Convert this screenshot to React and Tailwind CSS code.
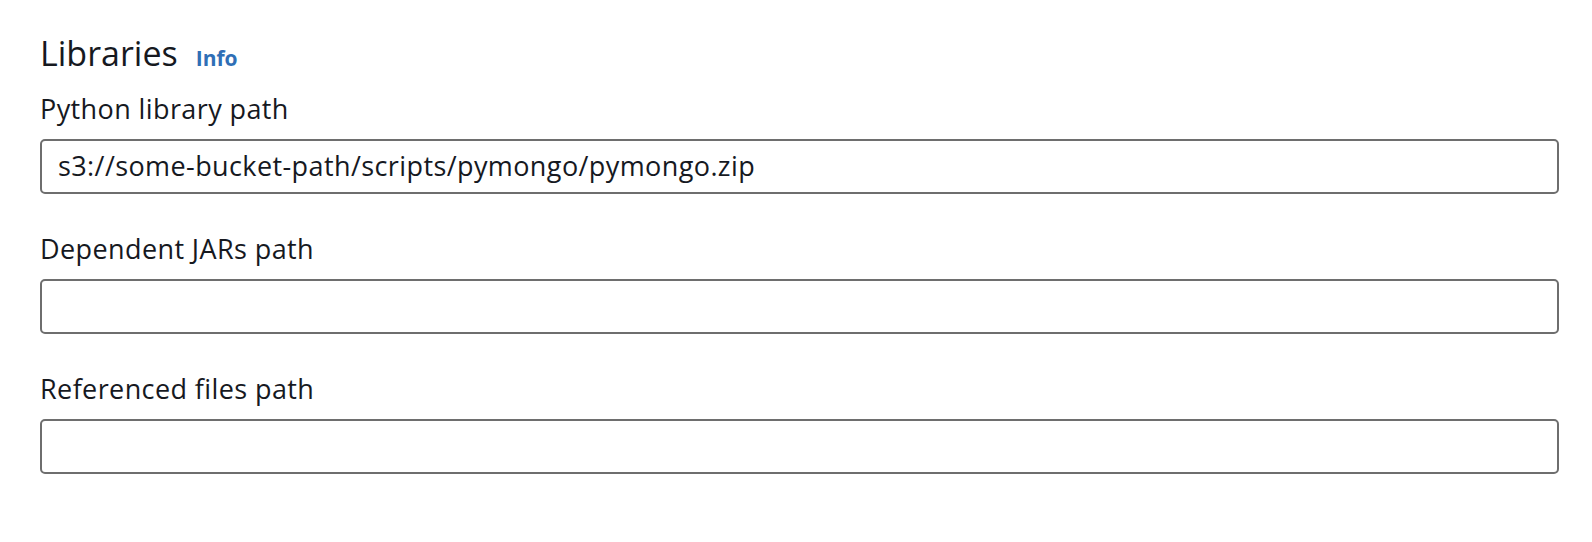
import React from "react";

function Field({ label, value }) {
  return (
    <div className="flex flex-col">
      <div className="text-[27px] leading-[32px] tracking-[0.4px] text-[#16191f]">{label}</div>
      <div className="mt-[14px] h-[55px] w-full rounded-[5px] border-2 border-[#6e6e6e] bg-white flex items-center pl-[16px] text-[27px] tracking-[0.4px] text-[#16191f]">
        {value}
      </div>
    </div>
  );
}

export default function App() {
  return (
    <div
      className="w-[1592px] h-[542px] bg-white pl-[40px] pt-[33px]"
      style={{ fontFamily: '"Open Sans", "Noto Sans", sans-serif' }}
    >
      <div className="w-[1519px]">
        <div className="flex items-baseline">
          <h2 className="text-[34px] leading-[40px] text-[#16191f] font-normal">Libraries</h2>
          <a className="ml-[18px] text-[21px] font-bold text-[#2f6fb6]">Info</a>
        </div>
        <div className="mt-[18px] flex flex-col gap-[39px]">
          <Field label="Python library path" value="s3://some-bucket-path/scripts/pymongo/pymongo.zip" />
          <Field label="Dependent JARs path" value="" />
          <Field label="Referenced files path" value="" />
        </div>
      </div>
    </div>
  );
}
